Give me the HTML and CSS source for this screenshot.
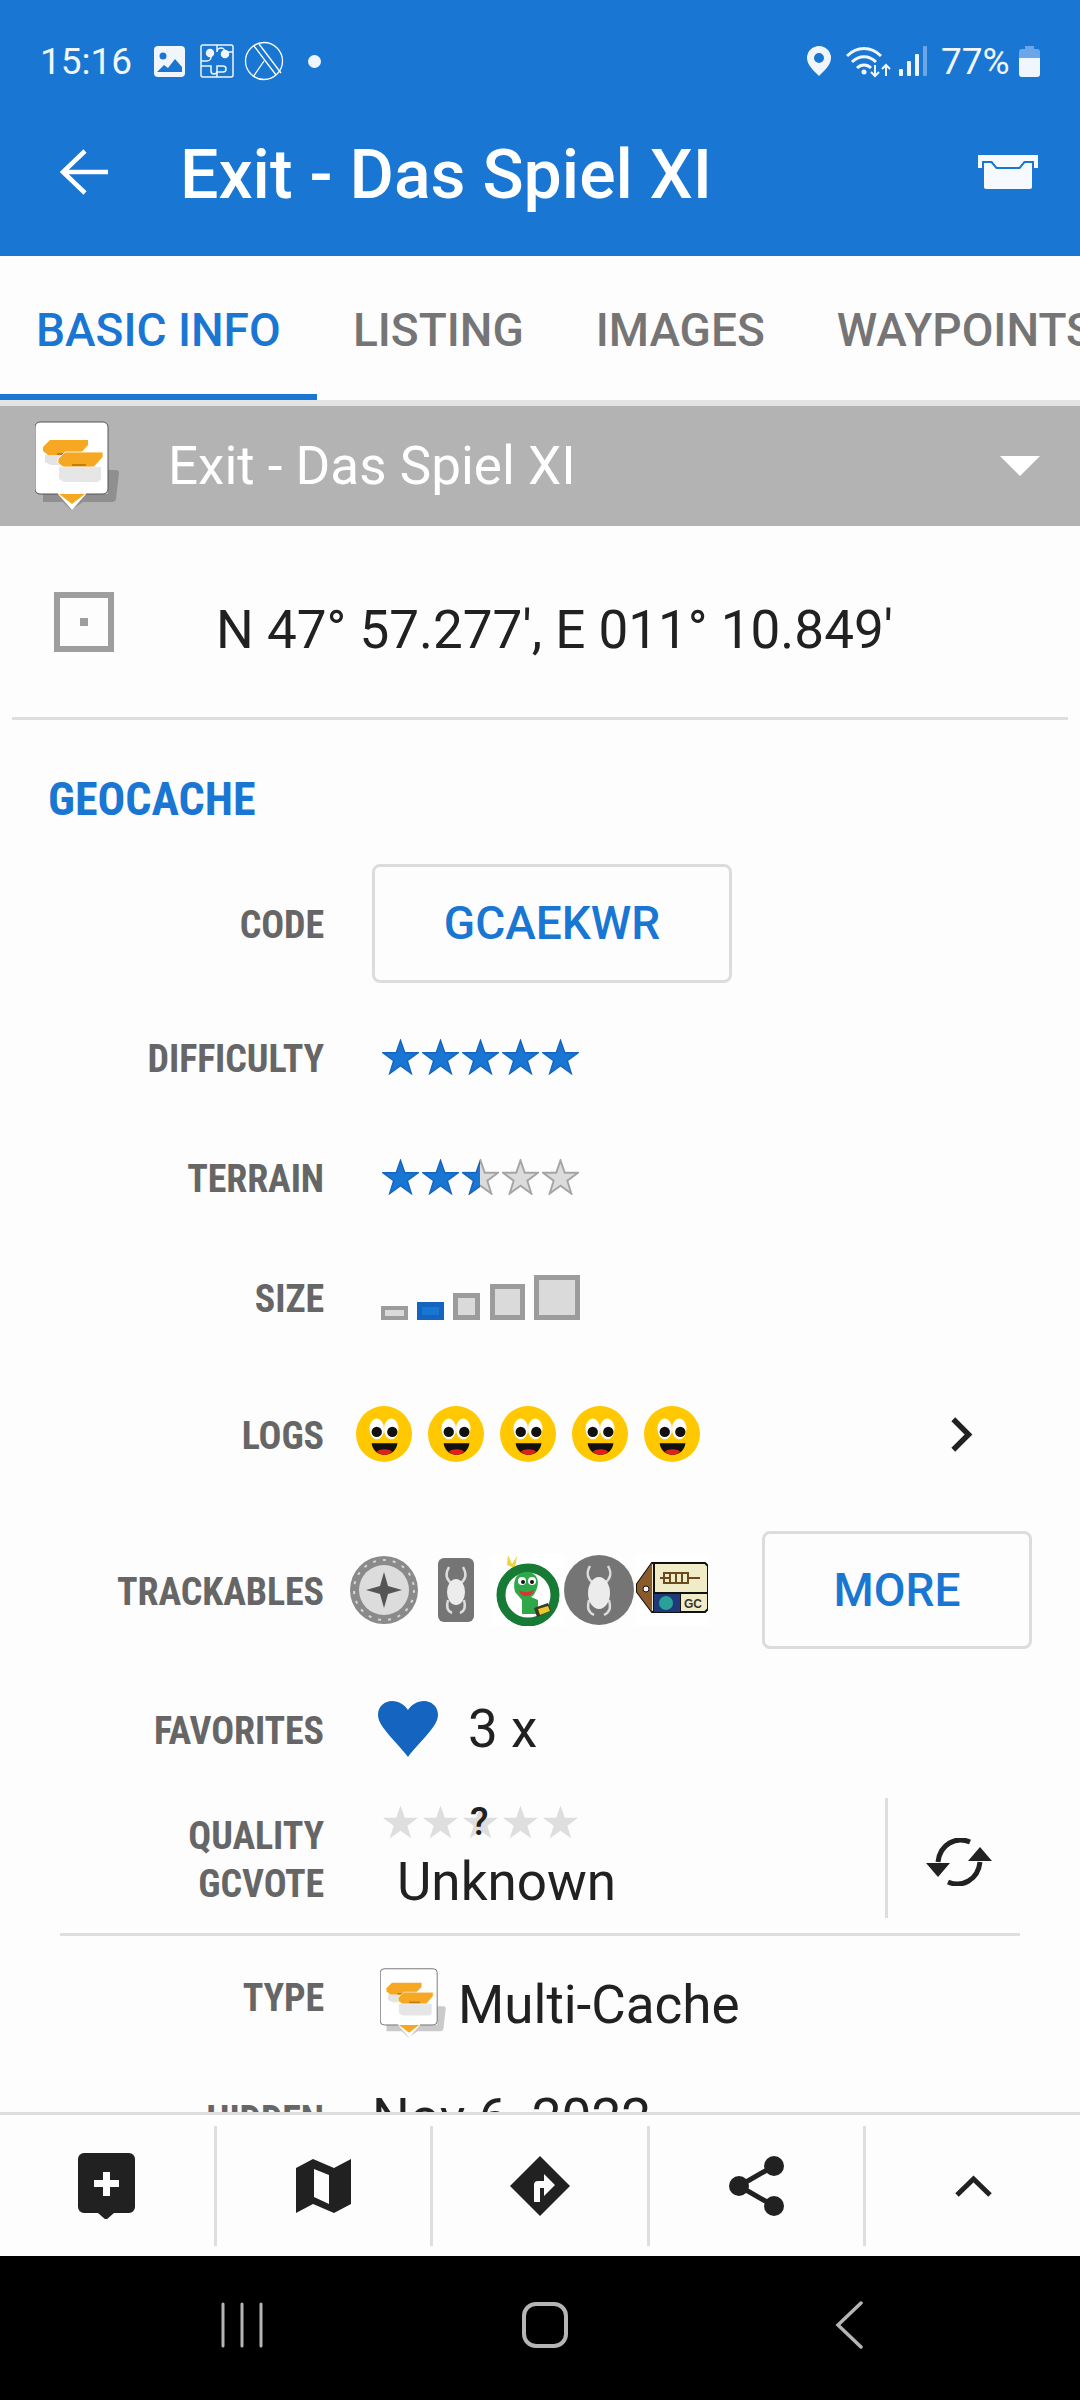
FILE: index.html
```html
<!DOCTYPE html>
<html lang="en">
<head>
    <meta charset="UTF-8">
    <meta name="viewport" content="width=device-width, initial-scale=1.0">
    <title>Exit - Das Spiel XI</title>
    <link rel="stylesheet" href="styles.css">
</head>
<body>
    <svg class="defs" width="0" height="0">
        <defs>
            <symbol id="marker" viewBox="0 0 84 100">
                <path d="M73 49h8c2 0 3 1 3 3l-3 26c0 2-2 3-4 3H48l-12 8-8-8H8v-8h65z" fill="#000" opacity=".2"/>
                <path d="M5 1h63a5 5 0 0 1 5 5v62a5 5 0 0 1-5 5H51L37 89 23 73H5a5 5 0 0 1-5-5V6a5 5 0 0 1 5-5z" fill="#fff"/>
                <path d="M5 1h63a5 5 0 0 1 5 5v62a5 5 0 0 1-5 5H51M23 73H5a5 5 0 0 1-5-5V6a5 5 0 0 1 5-5" fill="none" stroke="#555" stroke-width="1"/>
                <path d="M24 73h26L37 83z" fill="#f7a823"/>
                <path d="M10 34h40v10H16l-6-3z" fill="#e4e4e4"/>
                <path d="M15 19h38v5l-9 10H13l-5-4v-4z" fill="#f7a823"/>
                <path d="M22 32h12v2H22z" fill="#c07d12"/>
                <path d="M24 46h42v12l-3 3H29l-5-3z" fill="#e6e6e6"/>
                <path d="M30 31h38v5l-9 10H28l-5-4v-4z" fill="#f7a823" stroke="#fff" stroke-width=".8"/>
                <path d="M37 43h14v2H37z" fill="#c07d12"/>
            </symbol>
            <symbol id="star" viewBox="0 0 38 36">
                <path d="M19 1l4.400 12.600H37l-11 8.200 4.100 13.200L19 27l-11.100 8 4.100-13.200-11-8.200h13.600z"/>
            </symbol>
            <symbol id="smile" viewBox="0 0 54 54">
                <circle cx="27" cy="27" r="27" fill="#ffc800"/>
                <ellipse cx="20" cy="22" rx="7" ry="10" fill="#fff"/>
                <ellipse cx="34" cy="22" rx="7" ry="10" fill="#fff"/>
                <circle cx="20" cy="25" r="5" fill="#111"/>
                <circle cx="35" cy="25" r="5" fill="#111"/>
                <path d="M15 36h25c-1 7-6 11-12.500 11S16 43 15 36z" fill="#111"/>
                <path d="M20 44c4-3 11-3 15 0-2 2-5 3-7.500 3s-5.500-1-7.500-3z" fill="#e0201b"/>
            </symbol>
        </defs>
    </svg>

    <header class="appbar">
        <div class="status">
            <span class="clock">15:16</span>
            <svg class="st-img" viewBox="0 0 31 31"><rect width="31" height="31" rx="4" fill="#f1f6fd"/><circle cx="9" cy="10" r="3.500" fill="#1976d2"/><path d="M3 26l7-7 4 3 7-9 7 8v5z" fill="#1976d2"/></svg>
            <svg class="st-puzzle" viewBox="0 0 34 34" fill="none" stroke="#f1f6fd" stroke-width="1.500"><rect x="1" y="1" width="32" height="32" rx="2"/><path d="M1 17h6a4 4 0 1 0 0-8M17 1v7a4 4 0 1 1 8 0h8M1 22h10v5a3 3 0 0 0 6 0v-5h6a3 3 0 0 1 0 6h-6v5"/><circle cx="10" cy="9" r="3.500" fill="#f1f6fd"/><circle cx="25" cy="10" r="3.500" fill="#f1f6fd"/></svg>
            <svg class="st-x" viewBox="0 0 40 40" fill="none" stroke="#fff" stroke-width="1.300"><circle cx="20" cy="20" r="18.500"/><path d="M10 5l22 29M15 3l22 29M9 36l11-16"/></svg>
            <span class="st-dot"></span>
            <span class="st-gap"></span>
            <svg class="st-pin" viewBox="0 0 24 30"><path fill-rule="evenodd" d="M12 0a12 12 0 0 1 12 12c0 7-7 13-12 18C7 25 0 19 0 12A12 12 0 0 1 12 0zm0 7a5 5 0 1 0 0 10 5 5 0 0 0 0-10z" fill="#f1f6fd"/></svg>
            <svg class="st-wifi" viewBox="0 0 45 33" fill="none" stroke="#f1f6fd" stroke-width="3"><path d="M1 11c10-10 24-10 34 0M6 17c7-7 17-7 24 0M11 23c4-4 10-4 14 0"/><circle cx="18" cy="27" r="2.500" fill="#f1f6fd" stroke="none"/><path d="M29 20v11M25 27l4 4 4-4M40 31V20M36 24l4-4 4 4" stroke-width="2"/></svg>
            <svg class="st-signal" viewBox="0 0 28 30"><rect x="0" y="23" width="4" height="7" rx="1" fill="#f1f6fd"/><rect x="8" y="15" width="4" height="15" rx="1" fill="#f1f6fd"/><rect x="16" y="8" width="4" height="22" rx="1" fill="#f1f6fd"/><rect x="24" y="0" width="4" height="30" rx="1" fill="#6aa6e8"/></svg>
            <span class="pct">77%</span>
            <svg class="st-batt" viewBox="0 0 21 31"><path d="M6 0h9v3h3a3 3 0 0 1 3 3v6H0V6a3 3 0 0 1 3-3h3z" fill="#6aa6e8"/><path d="M0 12h21v16a3 3 0 0 1-3 3H3a3 3 0 0 1-3-3z" fill="#f1f6fd"/></svg>
        </div>
        <div class="toolbar">
            <svg class="back" viewBox="0 0 48 46" fill="none" stroke="#fff" stroke-width="4.500"><path d="M25 2L3 23l22 21M3 23h45"/></svg>
            <h1>Exit - Das Spiel XI</h1>
            <svg class="box" viewBox="0 0 60 34" fill="#f6faff"><path d="M0 0h60v13h-4V6H46l-5 6H19l-5-6H4v7H0z"/><path d="M6 8h7l5 6h24l5-6h7v24a2 2 0 0 1-2 2H8a2 2 0 0 1-2-2z"/></svg>
        </div>
    </header>

    <nav class="tabs">
        <a class="tab active">BASIC INFO</a>
        <a class="tab">LISTING</a>
        <a class="tab">IMAGES</a>
        <a class="tab">WAYPOINTS</a>
    </nav>

    <div class="cachebar">
        <svg class="bar-marker"><use href="#marker"/></svg>
        <span class="bar-name">Exit - Das Spiel XI</span>
        <span class="caret"></span>
    </div>

    <main class="content">
        <div class="coords">
            <span class="coordbox"><i></i></span>
            <span class="coordtext">N 47° 57.277', E 011° 10.849'</span>
        </div>
        <div class="sep"></div>
        <h2>GEOCACHE</h2>

        <div class="row r-code">
            <div class="lbl">CODE</div>
            <div class="val"><button class="btn code-btn">GCAEKWR</button></div>
        </div>
        <div class="row r-diff">
            <div class="lbl">DIFFICULTY</div>
            <div class="val stars">
                <svg class="s on"><use href="#star"/></svg>
                <svg class="s on"><use href="#star"/></svg>
                <svg class="s on"><use href="#star"/></svg>
                <svg class="s on"><use href="#star"/></svg>
                <svg class="s on"><use href="#star"/></svg>
            </div>
        </div>
        <div class="row r-terr">
            <div class="lbl">TERRAIN</div>
            <div class="val stars">
                <svg class="s on"><use href="#star"/></svg>
                <svg class="s on"><use href="#star"/></svg>
                <span class="half"><svg class="s off"><use href="#star"/></svg><span class="half-on"><svg class="s on"><use href="#star"/></svg></span></span>
                <svg class="s off"><use href="#star"/></svg>
                <svg class="s off"><use href="#star"/></svg>
            </div>
        </div>
        <div class="row r-size">
            <div class="lbl">SIZE</div>
            <div class="val sizes">
                <span class="sz sz1"></span>
                <span class="sz sz2"></span>
                <span class="sz sz3"></span>
                <span class="sz sz4"></span>
                <span class="sz sz5"></span>
            </div>
        </div>
        <div class="row r-logs">
            <div class="lbl">LOGS</div>
            <div class="val logs">
                <svg class="smile"><use href="#smile"/></svg>
                <svg class="smile"><use href="#smile"/></svg>
                <svg class="smile"><use href="#smile"/></svg>
                <svg class="smile"><use href="#smile"/></svg>
                <svg class="smile"><use href="#smile"/></svg>
                <svg class="chev" viewBox="0 0 22 34" fill="none" stroke="#212121" stroke-width="5"><path d="M3 3l14 14L3 31"/></svg>
            </div>
        </div>
        <div class="row r-track">
            <div class="lbl">TRACKABLES</div>
            <div class="val tracks">
                <svg class="tb tb1" viewBox="0 0 68 68"><circle cx="34" cy="34" r="34" fill="#8a8a8a"/><circle cx="34" cy="34" r="30" fill="none" stroke="#d5d5d5" stroke-width="2" stroke-dasharray="3 7"/><circle cx="34" cy="34" r="25" fill="#dcdcdc"/><path d="M34 16l4 14 14 4-14 4-4 14-4-14-14-4 14-4z" fill="#555"/></svg>
                <svg class="tb tb2" viewBox="0 0 36 64"><rect width="36" height="64" rx="6" fill="#757575"/><g fill="none" stroke="#dcdcdc" stroke-width="2.500"><path d="M11 9c-4 7-3 12 2 16M25 9c4 7 3 12-2 16M10 42c-2 7-1 11 4 13M26 42c2 7 1 11-4 13"/></g><ellipse cx="18" cy="34" rx="9" ry="13" fill="#ececec"/></svg>
                <svg class="tb tb3" viewBox="0 0 72 72"><rect width="72" height="72" fill="#fff"/><path d="M16 1l4 9 5-8-2 12-8-3z" fill="#f3d33a"/><circle cx="36" cy="41" r="27" fill="#fff" stroke="#177a35" stroke-width="9"/><path d="M23 38c-3-14 3-20 12-20s13 8 10 16c-2 6-4 8-6 9l7 3v14H30V46z" fill="#2fa84a"/><circle cx="30" cy="27" r="4" fill="#fff"/><circle cx="40" cy="27" r="4" fill="#fff"/><circle cx="31" cy="28" r="2" fill="#111"/><circle cx="40" cy="28" r="2" fill="#111"/><path d="M27 36c5 3 11 3 15-1-1 5-4 7-8 7s-6-2-7-6z" fill="#d9352c"/><path d="M42 54l14-5 3 8-14 6z" fill="#3a3a22"/><path d="M46 55l10-3 2 5-10 4z" fill="#ecc92f"/></svg>
                <svg class="tb tb4" viewBox="0 0 70 70"><circle cx="35" cy="35" r="35" fill="#757575"/><g fill="none" stroke="#dcdcdc" stroke-width="2.500"><path d="M26 11c-4 7-3 12 3 17M44 11c4 7 3 12-3 17M25 45c-2 8-1 12 5 15M45 45c2 8 1 12-5 15"/></g><ellipse cx="35" cy="38" rx="11" ry="16" fill="#ececec"/></svg>
                <svg class="tb tb5" viewBox="0 0 72 72"><rect width="72" height="72" fill="#fff"/><path d="M16 9h53l3 3v43l-3 3H16L1 38v-8z" fill="#f1ecc8" stroke="#111" stroke-width="2"/><path d="M16 9L1 30v8l15 20z" fill="#8b5a2b"/><circle cx="10" cy="35" r="3" fill="#fff" stroke="#111"/><path d="M18 9v49M18 39h54M44 39v19" stroke="#111" stroke-width="2"/><rect x="18" y="40" width="26" height="18" fill="#1f3a7a"/><circle cx="30" cy="49" r="7" fill="#2aa198"/><path d="M24 24h10M28 19h24v10H28zM34 19v10M40 19v10M46 19v10M52 24h12" fill="none" stroke="#6b4a1e" stroke-width="2"/><text x="48" y="54" class="tagtext">GC</text></svg>
            </div>
            <button class="btn more-btn">MORE</button>
        </div>
        <div class="row r-fav">
            <div class="lbl">FAVORITES</div>
            <div class="val fav">
                <svg class="heart" viewBox="0 0 60 56"><path d="M30 56C20 42 0 26 0 14 0 5 7 0 14 0c7 0 13 4 16 9 3-5 9-9 16-9 7 0 14 5 14 14 0 12-20 28-30 42z" fill="#1565c0"/></svg>
                <span class="big">3 x</span>
            </div>
        </div>
        <div class="row r-qual">
            <div class="lbl">QUALITY<br>GCVOTE</div>
            <div class="val vote">
                <div class="votestars">
                    <svg class="s off2"><use href="#star"/></svg>
                    <svg class="s off2"><use href="#star"/></svg>
                    <svg class="s off2"><use href="#star"/></svg>
                    <svg class="s off2"><use href="#star"/></svg>
                    <svg class="s off2"><use href="#star"/></svg>
                    <span class="qmark">?</span>
                </div>
                <div class="big unknown">Unknown</div>
            </div>
            <div class="syncwrap">
                <svg class="sync" viewBox="0 0 66 48" fill="none" stroke="#212121" stroke-width="5"><path d="M44 4C30-2 14 6 12 24"/><path d="M22 44c14 6 30-2 32-20"/><path d="M0 25h24L12 39zM42 23h24L54 9z" fill="#212121" stroke="none"/></svg>
            </div>
        </div>
        <div class="sep sep-in"></div>
        <div class="row r-type">
            <div class="lbl">TYPE</div>
            <div class="val typeval">
                <svg class="type-marker"><use href="#marker"/></svg>
                <span class="big">Multi-Cache</span>
            </div>
        </div>
        <div class="row r-hidden">
            <div class="lbl">HIDDEN</div>
            <div class="val"><span class="big">Nov 6, 2022</span></div>
        </div>
    </main>

    <footer class="actions">
        <div class="act">
            <svg class="a-note" viewBox="0 0 57 66"><path fill-rule="evenodd" d="M6 0h45a6 6 0 0 1 6 6v48a6 6 0 0 1-6 6H36l-8 7-8-7H6a6 6 0 0 1-6-6V6a6 6 0 0 1 6-6zm19 19v8h-9v7h9v9h7v-9h9v-7h-9v-8z" fill="#212121"/></svg>
        </div>
        <div class="act">
            <svg class="a-map" viewBox="0 0 55 54"><path fill-rule="evenodd" d="M0 9l17-9 21 9L55 0v45l-17 9-21-9L0 54zm18 1v28l15 7V16z" fill="#212121"/></svg>
        </div>
        <div class="act">
            <svg class="a-dir" viewBox="0 0 60 60"><path fill-rule="evenodd" d="M30 0l30 30-30 30L0 30zM24 46V29a4 4 0 0 1 4-4h6v-7l11 11-11 11v-8h-4v14z" fill="#212121"/></svg>
        </div>
        <div class="act">
            <svg class="a-share" viewBox="0 0 55 60" fill="#212121"><circle cx="45" cy="10" r="10"/><circle cx="10" cy="30" r="10"/><circle cx="45" cy="50" r="10"/><path d="M45 10L10 30l35 20" fill="none" stroke="#212121" stroke-width="5"/></svg>
        </div>
        <div class="act last">
            <svg class="a-up" viewBox="0 0 37 22" fill="none" stroke="#212121" stroke-width="5"><path d="M2 20L18.500 4 35 20"/></svg>
        </div>
    </footer>

    <div class="navbar">
        <svg class="n-recent" viewBox="0 0 42 46" stroke="#b5b5b5" stroke-width="3" stroke-linecap="round"><path d="M2 2v42M21 2v42M40 2v42"/></svg>
        <span class="n-home"></span>
        <svg class="n-back" viewBox="0 0 28 48" fill="none" stroke="#b5b5b5" stroke-width="3.500" stroke-linecap="round"><path d="M26 2L3 24l23 22"/></svg>
    </div>
</body>
</html>
```

FILE: styles.css
```css
* {
    box-sizing: border-box;
}
html, body {
    margin: 0;
    padding: 0;
}
body {
    width: 1080px;
    height: 2400px;
    display: flex;
    flex-direction: column;
    overflow: hidden;
    background: #fdfdfd;
    font-family: Roboto, "Noto Sans", sans-serif;
    color: #212121;
}
.defs {
    position: absolute;
}

/* status + toolbar */
.appbar {
    height: 256px;
    flex: none;
    background: #1976d2;
    color: #fff;
}
.status {
    height: 122px;
    display: flex;
    align-items: center;
    padding: 0 40px 0 40px;
    color: #f1f6fd;
}
.clock {
    font-size: 37px;
    width: 114px;
}
.st-img { width: 31px; height: 31px; }
.st-puzzle { width: 34px; height: 34px; margin-left: 15px; }
.st-x { width: 40px; height: 40px; margin-left: 10px; }
.st-dot {
    width: 13px;
    height: 13px;
    border-radius: 50%;
    background: #f1f6fd;
    margin-left: 24px;
}
.st-gap { flex: 1; }
.st-pin { width: 24px; height: 30px; }
.st-wifi { width: 45px; height: 33px; margin-left: 15px; }
.st-signal { width: 28px; height: 30px; margin-left: 8px; }
.pct {
    font-size: 37px;
    margin-left: 14px;
    width: 78px;
}
.st-batt { width: 21px; height: 31px; }
.toolbar {
    height: 134px;
    display: flex;
    align-items: center;
    padding: 0 42px 34px 60px;
}
.back { width: 48px; height: 46px; flex: none; }
h1 {
    margin: 6px 0 0 72px;
    font-size: 68px;
    font-weight: 500;
    flex: 1;
}
.box { width: 60px; height: 34px; }

/* tabs */
.tabs {
    height: 150px;
    flex: none;
    display: flex;
    overflow: hidden;
    background: #fdfdfd;
    border-bottom: 6px solid #e4e4e4;
}
.tab {
    flex: none;
    height: 144px;
    padding: 47px 36px 0;
    font-size: 46px;
    font-weight: 500;
    color: #757575;
    white-space: nowrap;
}
.tab.active {
    color: #1976d2;
    border-bottom: 6px solid #1976d2;
    width: 317px;
    padding-left: 36px;
}

.cachebar {
    height: 120px;
    flex: none;
    background: #b3b3b3;
    display: flex;
    align-items: center;
    padding: 0 40px 0 35px;
}
.bar-marker { width: 84px; height: 100px; margin-top: 10px; flex: none; }
.bar-name {
    flex: 1;
    margin-left: 49px;
    font-size: 53px;
    color: #fff;
}
.caret {
    width: 0;
    height: 0;
    border-left: 20px solid transparent;
    border-right: 20px solid transparent;
    border-top: 20px solid #fff;
}

/* main list */
.content {
    flex: 1;
    min-height: 0;
    overflow: hidden;
}
.coords {
    height: 191px;
    display: flex;
    align-items: center;
    padding-left: 54px;
}
.coordbox {
    width: 60px;
    height: 60px;
    border: 6px solid #9e9e9e;
    display: flex;
    align-items: center;
    justify-content: center;
}
.coordbox i {
    width: 8px;
    height: 8px;
    background: #9e9e9e;
}
.coordtext {
    font-size: 53px;
    margin-left: 102px;
    margin-top: 16px;
}
.sep {
    height: 3px;
    background: #dedede;
    margin: 0 12px;
}
.sep-in {
    margin: 0 60px;
}
h2 {
    margin: 0;
    height: 143px;
    padding: 52px 0 0 48px;
    font-size: 46px;
    font-weight: 700;
    font-stretch: 75%;
    color: #1976d2;
}
.row {
    display: flex;
    align-items: center;
}
.lbl {
    width: 324px;
    flex: none;
    text-align: right;
    font-size: 38px;
    letter-spacing: -0.1px;
    font-weight: 700;
    font-stretch: 75%;
    line-height: 48px;
    color: #666;
    padding-top: 3px;
}
.val {
    margin-left: 48px;
}
.big {
    font-size: 53px;
}
.btn {
    background: #fdfdfd;
    border: 3px solid #dcdcdc;
    border-radius: 8px;
    font-family: Roboto, sans-serif;
    font-size: 46px;
    font-weight: 500;
    color: #1976d2;
    padding: 0;
}
.code-btn { width: 360px; height: 119px; }
.more-btn { width: 270px; height: 118px; margin-left: 54px; }

.r-code { height: 120px; }
.r-diff { height: 148px; }
.r-terr { height: 92px; }
.r-size { height: 148px; }
.r-logs { height: 126px; }
.r-track { height: 186px; }
.r-fav { height: 92px; }
.r-qual { height: 158px; align-items: center; }
.r-type { height: 124px; align-items: flex-start; padding-top: 32px; }
.r-hidden { height: 100px; align-items: flex-start; }

.stars, .votestars {
    display: flex;
    gap: 3px;
    margin-left: 58px;
}
.s { width: 37px; height: 36px; display: block; }
.s.on { fill: #1976d2; stroke: #1565c0; stroke-width: 1.5; }
.s.off { fill: #dcdcdc; stroke: #a5a5a5; stroke-width: 2; }
.s.off2 { fill: #dedede; }
.half {
    position: relative;
    width: 37px;
    height: 36px;
}
.half-on {
    position: absolute;
    left: 0;
    top: 0;
    width: 18px;
    height: 36px;
    overflow: hidden;
}

.sizes {
    display: flex;
    align-items: flex-end;
    margin-left: 57px;
    height: 46px;
}
.sz {
    display: block;
    background: #dadada;
    border: 5px solid #9c9c9c;
}
.sz1 { width: 27px; height: 14px; border-width: 4px; }
.sz2 { width: 27px; height: 18px; margin-left: 9px; background: #1976d2; border-color: #1565c0; }
.sz3 { width: 27px; height: 27px; margin-left: 9px; }
.sz4 { width: 35px; height: 36px; margin-left: 10px; }
.sz5 { width: 46px; height: 45px; margin-left: 9px; }

.logs {
    display: flex;
    align-items: center;
    gap: 16px;
    margin-left: 32px;
}
.smile { width: 56px; height: 56px; display: block; }
.chev { width: 24px; height: 37px; margin-left: 234px; }

.tracks {
    display: flex;
    align-items: center;
    margin-left: 26px;
    width: 358px;
}
.tb { display: block; flex: none; }
.tb1 { width: 68px; height: 68px; }
.tb2 { width: 36px; height: 64px; margin-left: 20px; }
.tb3 { width: 72px; height: 72px; margin-left: 18px; }
.tb4 { width: 70px; height: 70px; }
.tb5 { width: 72px; height: 72px; margin-left: 2px; }
.tagtext {
    font-family: "Liberation Sans", sans-serif;
    font-size: 12px;
    font-weight: 700;
    fill: #333;
}

.fav {
    display: flex;
    align-items: center;
    margin-left: 54px;
}
.heart { width: 60px; height: 56px; display: block; }
.fav .big { margin-left: 30px; }

.r-qual .lbl { padding-top: 12px; }
.vote {
    margin-left: 58px;
    width: 503px;
    position: relative;
    padding-top: 8px;
}
.votestars {
    margin-left: 0;
    position: relative;
}
.qmark {
    position: absolute;
    left: 88px;
    top: 0;
    font-size: 38px;
    font-weight: 500;
    line-height: 36px;
}
.unknown {
    margin: 12px 0 0 15px;
    line-height: 60px;
}
.syncwrap {
    height: 120px;
    border-left: 3px solid #dedede;
    padding: 40px 0 0 38px;
    margin-top: 8px;
}
.sync { width: 66px; height: 48px; display: block; }

.typeval {
    display: flex;
    align-items: flex-start;
    margin-left: 56px;
}
.type-marker { width: 66px; height: 78px; flex: none; }
.typeval .big { margin-left: 12px; line-height: 60px; margin-top: 7px; }
.r-type .lbl { margin-top: 3px; }
.r-hidden .lbl { margin-top: 33px; }
.r-hidden .val { line-height: 60px; margin-top: 28px; }

/* bottom actions */
.actions {
    height: 144px;
    border-top: 3px solid #dedede;
    background: #fdfdfd;
    display: flex;
    align-items: center;
    flex: none;
}
.act {
    width: 216.5px;
    height: 120px;
    border-right: 3px solid #dedede;
    display: flex;
    align-items: center;
    justify-content: center;
}
.act.last {
    border-right: 0;
    flex: 1;
}
.a-note { width: 57px; height: 66px; }
.a-map { width: 55px; height: 54px; }
.a-dir { width: 60px; height: 60px; }
.a-share { width: 55px; height: 60px; }
.a-up { width: 37px; height: 22px; }

/* android nav */
.navbar {
    height: 144px;
    flex: none;
    background: #000;
    display: flex;
    align-items: center;
    padding: 0 0 6px 221px;
}
.n-recent { width: 42px; height: 46px; }
.n-home {
    width: 46px;
    height: 46px;
    border: 4px solid #b5b5b5;
    border-radius: 14px;
    margin-left: 259px;
}
.n-back { width: 28px; height: 48px; margin-left: 267px; }
```
